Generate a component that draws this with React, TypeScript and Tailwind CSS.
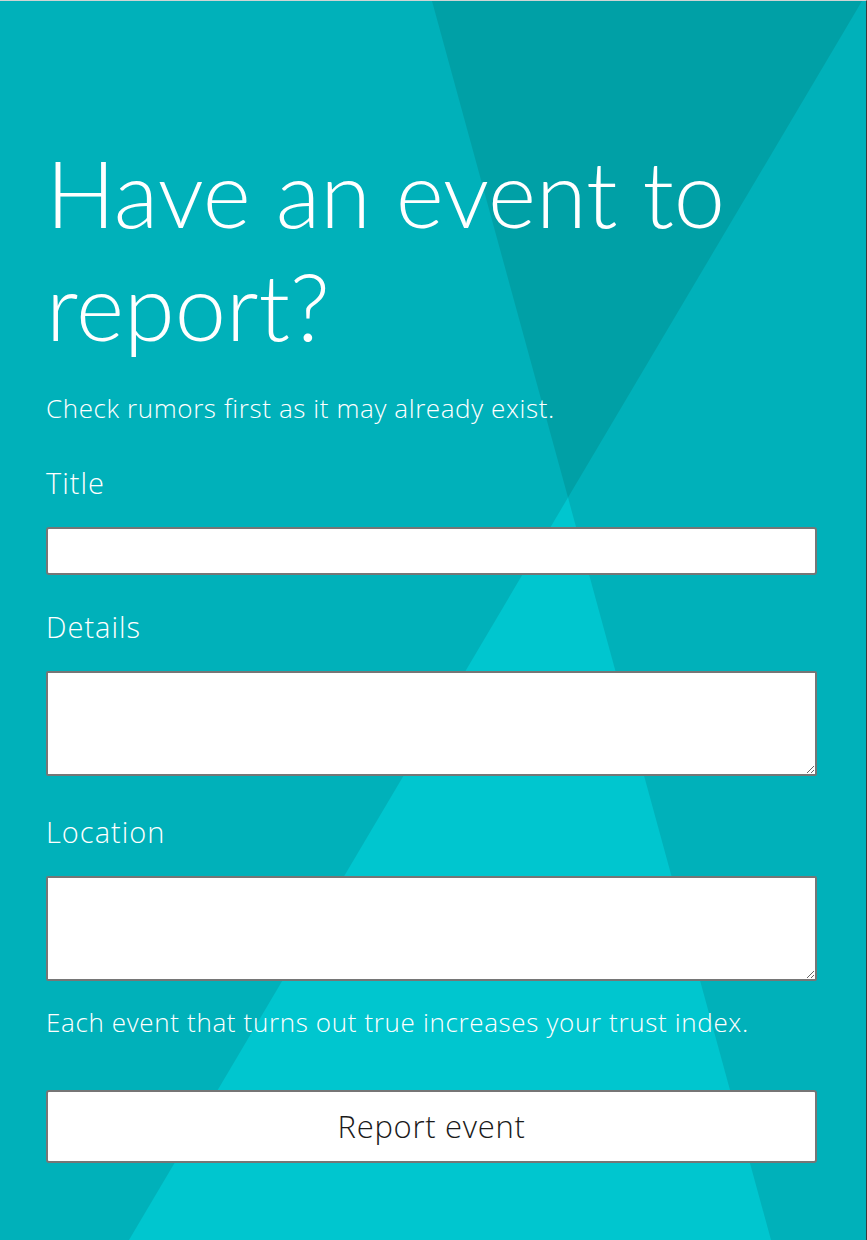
export default function App() {
  return (
    <div className="relative h-[1240px] w-full overflow-hidden border-t border-r border-t-[#cfd4d4] border-r-[#3a3a3a] bg-[#00b1ba] font-['Open_Sans',sans-serif] font-light text-white">
      <svg className="absolute inset-0 h-full w-full" viewBox="0 0 866 1240" preserveAspectRatio="none">
        <polygon points="432,0 862,0 568,497" fill="#00a0a6" />
        <polygon points="568,497 771,1240 129,1240" fill="#00c6cf" />
      </svg>
      <div className="relative flex flex-col pl-[46px] pr-[49px] pt-[135px]">
        <h1 className="font-['Lato',sans-serif] text-[92px] font-light leading-[113px]">Have an event to report?</h1>
        <p className="mt-[30px] text-[26px] leading-[32px] tracking-[0.6px]">Check rumors first as it may already exist.</p>
        <label className="mt-[43px] text-[29px] leading-[32px] tracking-[1px]">Title</label>
        <input
          type="text"
          className="mt-[28px] h-[48px] w-full rounded-[3px] border-2 border-[#767676] bg-white px-2 text-black"
        />
        <label className="mt-[36px] text-[29px] leading-[32px] tracking-[1px]">Details</label>
        <textarea className="mt-[28px] block h-[105px] w-full rounded-[2px] border-2 border-[#767676] bg-white p-2 text-black" />
        <label className="mt-[40px] text-[29px] leading-[32px] tracking-[1px]">Location</label>
        <textarea className="mt-[28px] block h-[105px] w-full rounded-[2px] border-2 border-[#767676] bg-white p-2 text-black" />
        <p className="mt-[25px] text-[26px] leading-[32px] tracking-[0.65px]">Each event that turns out true increases your trust index.</p>
        <button className="mt-[52px] h-[73px] w-full rounded-[3px] border-2 border-[#767676] bg-white text-[31px] font-light tracking-[0.7px] text-[#1a1a1a]">
          Report event
        </button>
      </div>
    </div>
  );
}
